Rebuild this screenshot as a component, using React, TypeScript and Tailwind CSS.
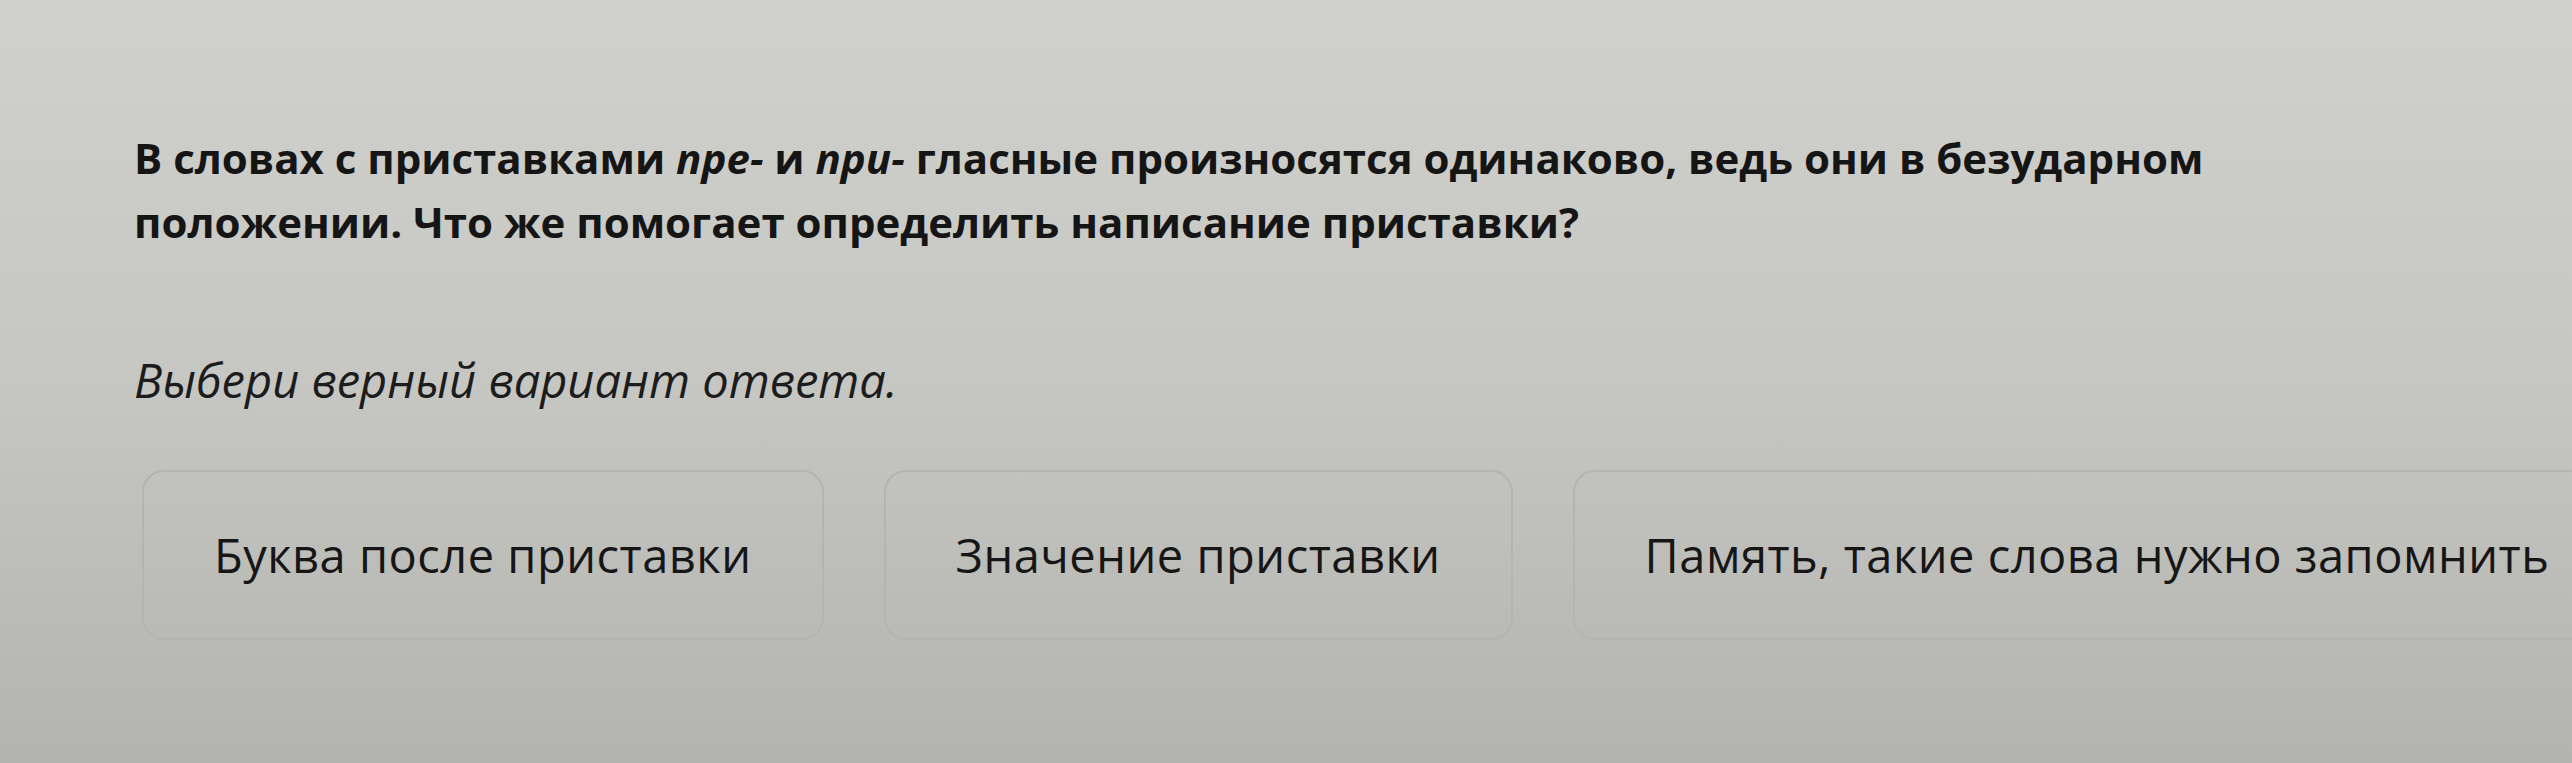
const options = [
  'Буква после приставки',
  'Значение приставки',
  'Память, такие слова нужно запомнить',
];

export default function App() {
  return (
    <div
      className="w-[2572px] h-[763px] overflow-hidden bg-gradient-to-b from-[#d0d0cc] via-[#c6c6c2] to-[#b3b3af] text-[#151515]"
      style={{ fontFamily: '"Open Sans", "Noto Sans", sans-serif' }}
    >
      <div className="pl-[134px] pt-[126px]">
        {/* Question */}
        <p className="text-[42px] leading-[64px] font-bold w-[2150px]">
          В словах с приставками <i>пре-</i> и <i>при-</i> гласные произносятся одинаково, ведь они в безударном
          положении. Что же помогает определить написание приставки?
        </p>

        {/* Hint */}
        <p className="mt-[96px] text-[47px] leading-[61px] italic text-[#1c1c1c]">Выбери верный вариант ответа.</p>

        {/* Answers */}
        <div className="mt-[59px] ml-[8px] flex gap-[60px] whitespace-nowrap">
          {options.map(o => (
            <button
              key={o}
              className="h-[170px] px-[70px] rounded-[22px] border-2 border-[#b4b4b0] text-[47px] tracking-[0.5px] leading-none text-[#161616] flex items-center shrink-0"
            >
              {o}
            </button>
          ))}
        </div>
      </div>
    </div>
  );
}
